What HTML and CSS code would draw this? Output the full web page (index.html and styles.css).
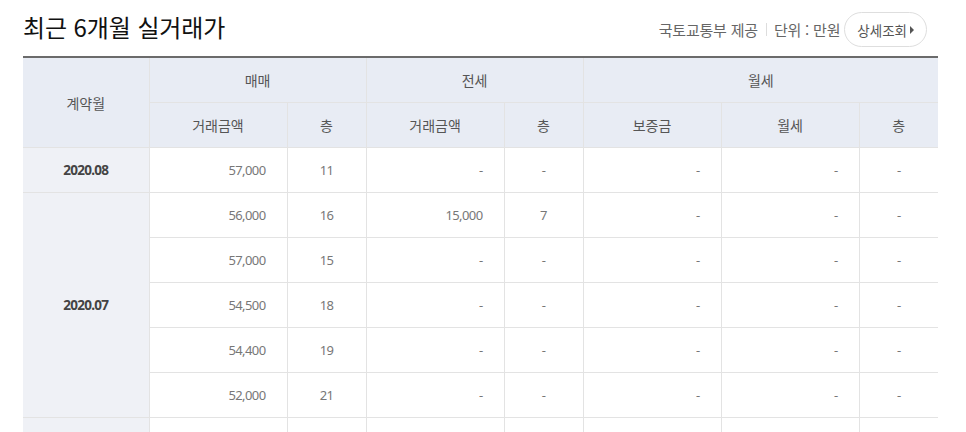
FILE: index.html
```html
<!DOCTYPE html>
<html lang="ko">
<head>
<meta charset="utf-8">
<link rel="stylesheet" href="styles.css">
</head>
<body>
<div class="wrap">
  <div class="head">
    <h2 class="title">최근 6개월 실거래가</h2>
    <div class="meta">
      <span class="src">국토교통부 제공</span>
      <span class="sep"></span>
      <span class="unit">단위 : 만원</span>
      <button class="more">상세조회<span class="tri"></span></button>
    </div>
  </div>
  <table class="tbl">
    <colgroup>
      <col class="c-month"><col class="c-amt"><col class="c-fl"><col class="c-amt"><col class="c-fl"><col class="c-amt"><col class="c-amt"><col class="c-fl">
    </colgroup>
    <thead>
      <tr>
        <th rowspan="2">계약월</th>
        <th colspan="2">매매</th>
        <th colspan="2">전세</th>
        <th colspan="3">월세</th>
      </tr>
      <tr>
        <th>거래금액</th><th>층</th><th>거래금액</th><th>층</th><th>보증금</th><th>월세</th><th>층</th>
      </tr>
    </thead>
    <tbody>
      <tr>
        <td class="month">2020.08</td>
        <td class="r">57,000</td><td>11</td><td class="r">-</td><td>-</td><td class="r">-</td><td class="r">-</td><td>-</td>
      </tr>
      <tr>
        <td class="month" rowspan="5">2020.07</td>
        <td class="r">56,000</td><td>16</td><td class="r">15,000</td><td>7</td><td class="r">-</td><td class="r">-</td><td>-</td>
      </tr>
      <tr>
        <td class="r">57,000</td><td>15</td><td class="r">-</td><td>-</td><td class="r">-</td><td class="r">-</td><td>-</td>
      </tr>
      <tr>
        <td class="r">54,500</td><td>18</td><td class="r">-</td><td>-</td><td class="r">-</td><td class="r">-</td><td>-</td>
      </tr>
      <tr>
        <td class="r">54,400</td><td>19</td><td class="r">-</td><td>-</td><td class="r">-</td><td class="r">-</td><td>-</td>
      </tr>
      <tr>
        <td class="r">52,000</td><td>21</td><td class="r">-</td><td>-</td><td class="r">-</td><td class="r">-</td><td>-</td>
      </tr>
      <tr class="cut">
        <td class="month"></td>
        <td class="r"></td><td></td><td class="r"></td><td></td><td class="r"></td><td class="r"></td><td></td>
      </tr>
    </tbody>
  </table>
</div>
</body>
</html>
```
FILE: styles.css
```css
html, body {
  margin: 0;
  padding: 0;
  background: #fff;
  font-family: "Noto Sans", "Noto Sans CJK KR", sans-serif;
  overflow: hidden;
}
.wrap {
  width: 915px;
  margin-left: 23px;
}
.head {
  height: 56px;
  display: flex;
  align-items: center;
  justify-content: space-between;
}
.title {
  margin: 0 0 4px 0;
  font-family: "Noto Sans CJK KR", sans-serif;
  font-size: 24px;
  font-weight: 400;
  color: #111;
  letter-spacing: -0.1px;
}
.meta {
  display: flex;
  align-items: center;
  font-family: "Noto Sans CJK KR", sans-serif;
  font-size: 15px;
  color: #666;
  margin-right: 11px;
  margin-top: 3px;
  letter-spacing: -0.2px;
}
.sep {
  width: 1px;
  height: 13px;
  background: #ddd;
  margin: 0 7px 0 8px;
}
.more {
  margin-left: 4px;
  height: 35px;
  padding: 0 12px 0 12px;
  border: 1px solid #dedede;
  border-radius: 18px;
  background: #fff;
  font-family: inherit;
  font-size: 13.5px;
  color: #555;
  display: flex;
  align-items: center;
}
.tri {
  display: inline-block;
  width: 0;
  height: 0;
  border-top: 4px solid transparent;
  border-bottom: 4px solid transparent;
  border-left: 4px solid #555;
  margin-left: 3px;
}
.tbl {
  width: 915px;
  border-collapse: collapse;
  table-layout: fixed;
  border-top: 2px solid #6b6b6b;
}
.c-month { width: 126px; }
.c-amt { width: 138px; }
.c-fl { width: 79px; }
.tbl th, .tbl td {
  height: 44px;
  padding: 0;
  border: 1px solid #e3e3e3;
  text-align: center;
  font-size: 14px;
}
.tbl tr > :first-child { border-left: none; }
.tbl tr > :last-child { border-right: none; }
.tbl tbody tr > td.month + td { border-left: 1px solid #e3e3e3; }
.tbl th {
  background: #e8ecf4;
  color: #555;
  font-family: "Noto Sans CJK KR", sans-serif;
  font-weight: 400;
}
.tbl td {
  color: #777;
  font-size: 13px;
  letter-spacing: -0.6px;
}
.tbl td.r {
  text-align: right;
  padding-right: 21px;
}
.tbl td.month {
  background: #eff1f6;
  color: #444;
  font-size: 13.5px;
  font-weight: 700;
  letter-spacing: -0.7px;
}
```
